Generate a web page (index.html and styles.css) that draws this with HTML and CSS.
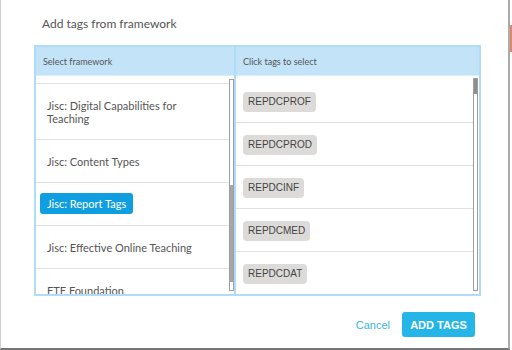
FILE: index.html
```html
<!DOCTYPE html>
<html lang="en">
<head>
    <meta charset="UTF-8">
    <title>Add tags from framework</title>
    <link rel="stylesheet" href="styles.css">
</head>
<body>
    <div class="modal">
        <h2 class="modal-title">Add tags from framework</h2>

        <div class="picker">
            <div class="picker-col frameworks">
                <div class="col-head">Select framework</div>
                <div class="col-body">
                    <div class="list-view">
                        <ul class="list framework-list">
                            <li class="partial"></li>
                            <li>Jisc: Digital Capabilities for Teaching</li>
                            <li>Jisc: Content Types</li>
                            <li class="selected"><span class="chip">Jisc: Report Tags</span></li>
                            <li>Jisc: Effective Online Teaching</li>
                            <li>FTE Foundation</li>
                        </ul>
                    </div>
                    <div class="scrollbar left-bar"><div class="thumb"></div></div>
                </div>
            </div>

            <div class="picker-col tags">
                <div class="col-head">Click tags to select</div>
                <div class="col-body">
                    <div class="list-view">
                        <ul class="list tag-list">
                            <li><span class="tag">REPDCPROF</span></li>
                            <li><span class="tag">REPDCPROD</span></li>
                            <li><span class="tag">REPDCINF</span></li>
                            <li><span class="tag">REPDCMED</span></li>
                            <li><span class="tag">REPDCDAT</span></li>
                        </ul>
                    </div>
                    <div class="scrollbar right-bar"><div class="thumb"></div></div>
                </div>
            </div>
        </div>

        <div class="modal-actions">
            <button class="btn-link">Cancel</button>
            <button class="btn-primary">ADD TAGS</button>
        </div>
    </div>

    <div class="backdrop">
        <div class="backdrop-mark"></div>
    </div>
</body>
</html>
```

FILE: styles.css
```css
:root {
    --blue-border: #b0dcf6;
    --blue-head: #c3e4f8;
    --blue-chip: #0f9fe0;
    --blue-btn: #25b6e7;
    --text: #555555;
    --line: #e2e2e2;
}

* {
    box-sizing: border-box;
    margin: 0;
    padding: 0;
}

body {
    font-family: 'Lato', sans-serif;
    background: #ffffff;
    display: flex;
    width: 512px;
    height: 350px;
    overflow: hidden;
}

.modal {
    width: 510px;
    height: 350px;
    background: #ffffff;
    border-left: 1px solid #cfcfcf;
    border-right: 2px solid #ababab;
    border-bottom: 2px solid #767676;
    padding: 16px 0 0 33px;
    display: flex;
    flex-direction: column;
}

.modal-title {
    font-size: 12px;
    font-weight: 400;
    color: var(--text);
    line-height: 15px;
    margin-left: 8px;
    margin-bottom: 14px;
}

.picker {
    width: 447px;
    height: 251px;
    border: 2px solid var(--blue-border);
    display: flex;
}

.picker-col {
    display: flex;
    flex-direction: column;
}

.frameworks {
    width: 200px;
    border-right: 2px solid var(--blue-border);
}

.tags {
    flex: 1;
}

.col-head {
    height: 29px;
    background: var(--blue-head);
    font-size: 9px;
    color: var(--text);
    padding: 0 7px;
    display: flex;
    align-items: center;
    border-bottom: 1px solid #d8eefb;
}

.col-body {
    flex: 1;
    display: flex;
    overflow: hidden;
}

.list-view {
    flex: 1;
    overflow: hidden;
}

.list {
    list-style: none;
}

.framework-list li {
    font-size: 11px;
    line-height: 13px;
    color: var(--text);
    padding: 15px 30px 14px 11px;
    border-bottom: 1px solid var(--line);
}

.framework-list li.partial {
    height: 8px;
    padding: 0;
}

.framework-list li.selected {
    display: flex;
    padding: 10px 4px 11px;
}

.chip {
    background: var(--blue-chip);
    color: #ffffff;
    font-size: 11px;
    line-height: 13px;
    padding: 4px 7px;
    border-radius: 3px;
}

.tag-list {
    padding-top: 4px;
}

.tag-list li {
    display: flex;
    padding: 12px 7px 10px;
    border-bottom: 1px solid var(--line);
}

.tag {
    background: #dddbd9;
    color: #444444;
    font-family: 'Liberation Sans', Arial, sans-serif;
    font-size: 10px;
    line-height: 12px;
    padding: 4px 5px;
    border-radius: 4px;
}

.scrollbar {
    width: 5px;
    border: 1px solid #9e9e9e;
    background: #ffffff;
    display: flex;
    flex-direction: column;
}

.left-bar {
    margin: 3px 0 3px 0;
    padding-top: 105px;
    padding-bottom: 8px;
}

.left-bar .thumb {
    flex: 1;
    background: #a6a6a6;
}

.right-bar {
    margin: 2px 1px 3px 0;
}

.right-bar .thumb {
    height: 15px;
    background: #8e8e8e;
}

.modal-actions {
    width: 441px;
    display: flex;
    justify-content: flex-end;
    align-items: center;
    gap: 12px;
    margin-top: 16px;
}

.btn-link {
    background: none;
    border: none;
    color: #3ab4d9;
    font-family: 'Liberation Sans', Arial, sans-serif;
    font-size: 11px;
    cursor: pointer;
}

.btn-primary {
    width: 73px;
    height: 25px;
    background: var(--blue-btn);
    color: #ffffff;
    border: none;
    border-radius: 3px;
    font-family: 'Liberation Sans', Arial, sans-serif;
    font-weight: bold;
    font-size: 11px;
    cursor: pointer;
}

.backdrop {
    width: 2px;
    height: 350px;
    padding-top: 25px;
}

.backdrop-mark {
    height: 27px;
    background: #d98a6c;
}
```
